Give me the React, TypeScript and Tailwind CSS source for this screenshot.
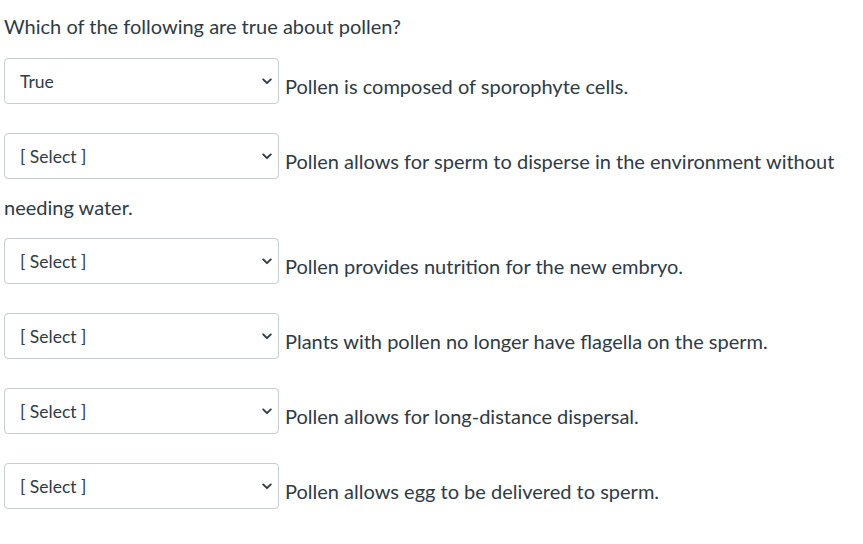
import React from "react";

interface Question {
  answer: string;
  text: string;
}

const QUESTIONS: Question[] = [
  { answer: "True", text: "Pollen is composed of sporophyte cells." },
  {
    answer: "[ Select ]",
    text: "Pollen allows for sperm to disperse in the environment without needing water.",
  },
  { answer: "[ Select ]", text: "Pollen provides nutrition for the new embryo." },
  { answer: "[ Select ]", text: "Plants with pollen no longer have flagella on the sperm." },
  { answer: "[ Select ]", text: "Pollen allows for long-distance dispersal." },
  { answer: "[ Select ]", text: "Pollen allows egg to be delivered to sperm." },
];

function Chevron() {
  return (
    <svg width="10" height="7" viewBox="0 0 10 7" fill="none" className="shrink-0">
      <path d="M1.2 1.4 5 5.2 8.8 1.4" stroke="#2d3b45" strokeWidth="1.9" strokeLinecap="round" strokeLinejoin="round" />
    </svg>
  );
}

// Inline dropdown that sits in the sentence flow
function Dropdown({ value }: { value: string }) {
  return (
    <span className="inline-block h-[46px] w-[275px] mr-[6px] mb-[13px] align-[-23px] overflow-hidden rounded-[4px] border border-[#c7cdd1] bg-white">
      <span className="flex h-full items-center justify-between pl-[15px] pr-[6px] text-[17.5px] leading-[21px] text-[#2d3b45]">
        <span>{value}</span>
        <Chevron />
      </span>
    </span>
  );
}

export default function App() {
  return (
    <div
      className="min-h-screen bg-white px-[4px] pt-[11px] text-[20px] leading-[30px] text-[#2d3b45]"
      style={{ fontFamily: "Lato, 'Noto Sans', sans-serif" }}
    >
      <p className="mb-[17px]">Which of the following are true about pollen?</p>
      {QUESTIONS.map((q, i) => (
        <p key={i} className="mb-[16px]">
          <Dropdown value={q.answer} />
          {q.text}
        </p>
      ))}
    </div>
  );
}
